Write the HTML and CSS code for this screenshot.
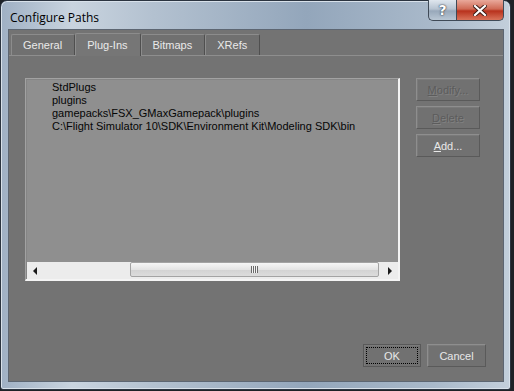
FILE: index.html
```html
<!DOCTYPE html>
<html lang="en">
<head>
    <meta charset="UTF-8">
    <title>Configure Paths</title>
    <link rel="stylesheet" href="styles.css">
</head>
<body>
    <div class="window">
        <div class="titlebar">
            <span class="title">Configure Paths</span>
            <div class="caption-buttons">
                <span class="cap help">?</span>
                <span class="cap close">
                    <svg width="14" height="11" viewBox="0 0 14 11">
                        <path d="M2 1 L12 10 M12 1 L2 10" stroke="#3a1a14" stroke-width="4" stroke-linecap="square"/>
                        <path d="M2 1 L12 10 M12 1 L2 10" stroke="#ffffff" stroke-width="2.2" stroke-linecap="square"/>
                    </svg>
                </span>
            </div>
        </div>
        <div class="client">
            <div class="tabs">
                <div class="tab">General</div>
                <div class="tab active">Plug-Ins</div>
                <div class="tab">Bitmaps</div>
                <div class="tab">XRefs</div>
            </div>
            <div class="page">
                <div class="top-row">
                    <div class="listbox">
                        <div class="items">
                            <div class="item">StdPlugs</div>
                            <div class="item">plugins</div>
                            <div class="item">gamepacks\FSX_GMaxGamepack\plugins</div>
                            <div class="item">C:\Flight Simulator 10\SDK\Environment Kit\Modeling SDK\bin</div>
                        </div>
                        <div class="hscroll">
                            <span class="arrow left"></span>
                            <div class="track">
                                <div class="thumb"><span class="grip"></span></div>
                            </div>
                            <span class="arrow right"></span>
                        </div>
                    </div>
                    <div class="side-buttons">
                        <button class="btn disabled"><u>M</u>odify...</button>
                        <button class="btn disabled"><u>D</u>elete</button>
                        <button class="btn"><u>A</u>dd...</button>
                    </div>
                </div>
                <div class="footer">
                    <button class="btn default"><span class="focus">OK</span></button>
                    <button class="btn">Cancel</button>
                </div>
            </div>
        </div>
    </div>
</body>
</html>
```

FILE: styles.css
```css
body {
    margin: 0;
    background: #1e2227;
    font-family: "Liberation Sans", Arial, sans-serif;
    font-size: 11px;
}
.window {
    width: 511px;
    height: 390px;
    box-sizing: border-box;
    border: 1px solid #2b3440;
    border-radius: 7px 7px 3px 3px;
    background: linear-gradient(90deg, #9fb0c4 0%, #c9d4df 14%, #b3c1d0 30%, #93a6bb 60%, #a9b9ca 85%, #c3cfdb 100%);
    padding: 0 6px 7px 7px;
    display: flex;
    flex-direction: column;
    box-shadow: inset 0 0 0 1px #d8e1ea;
}
.titlebar {
    height: 28px;
    display: flex;
    align-items: flex-start;
    justify-content: space-between;
    flex-shrink: 0;
}
.title {
    font-family: "Open Sans", "DejaVu Sans", sans-serif;
    font-size: 12px;
    color: #000;
    margin: 8px 0 0 2px;
}
.caption-buttons {
    display: flex;
    margin-top: -1px;
}
.cap {
    height: 20px;
    display: flex;
    align-items: center;
    justify-content: center;
    border: 1px solid #3f4a57;
    border-top: none;
}
.help {
    width: 27px;
    border-radius: 0 0 0 5px;
    border-right: none;
    background: linear-gradient(#dfe6ee, #b6c3d1 45%, #98a8ba 55%, #b9c7d4);
    color: #fff;
    font-weight: bold;
    font-size: 14px;
    font-family: "DejaVu Sans", sans-serif;
    text-shadow: 0 0 2px #2c3440, 0 0 1px #2c3440;
}
.close {
    width: 46px;
    border-radius: 0 0 5px 0;
    background: linear-gradient(#e9a99b, #cf6a55 45%, #b8321d 55%, #d9735a);
}
.client {
    flex: 1;
    background: #737373;
    border: 1px solid #5d6672;
    display: flex;
    flex-direction: column;
    color: #e6e6e6;
}
.tabs {
    display: flex;
    padding: 3px 0 0 2px;
    height: 22px;
    flex-shrink: 0;
}
.tab {
    margin-top: 1px;
    height: 20px;
    padding: 0 12px 0 11px;
    display: flex;
    align-items: center;
    border: 1px solid #8c8c8c;
    border-bottom: none;
    border-right-color: #4f4f4f;
    border-radius: 2px 2px 0 0;
    background: #707070;
    color: #eaeaea;
}
.tab.active {
    margin-top: 0;
    height: 22px;
    background: #767676;
    position: relative;
    z-index: 1;
    margin-bottom: -1px;
}
.page {
    flex: 1;
    border-top: 1px solid #8e8e8e;
    display: flex;
    flex-direction: column;
    padding: 22px 17px 14px 16px;
}
.top-row {
    display: flex;
    align-items: flex-start;
}
.listbox {
    width: 375px;
    height: 203px;
    box-sizing: border-box;
    border: 1px solid #a2a2a2;
    border-right: 2px solid #f4f4f4;
    border-bottom: 2px solid #f4f4f4;
    box-shadow: inset 1px 1px 0 #858585;
    background: #8f8f8f;
    display: flex;
    flex-direction: column;
}
.items {
    flex: 1;
    padding: 2px 0 0 26px;
    color: #050505;
}
.item {
    line-height: 13px;
    height: 13px;
}
.hscroll {
    height: 17px;
    margin: 0 0 0 1px;
    display: flex;
    background: #ececec;
}
.arrow {
    width: 17px;
    height: 17px;
    position: relative;
}
.arrow::after {
    content: "";
    position: absolute;
    top: 5px;
    border-top: 4px solid transparent;
    border-bottom: 4px solid transparent;
}
.arrow.left::after {
    left: 6px;
    border-right: 4px solid #1a1a1a;
}
.arrow.right::after {
    left: 7px;
    border-left: 4px solid #1a1a1a;
}
.track {
    flex: 1;
    display: flex;
    padding-left: 86px;
}
.thumb {
    width: 249px;
    height: 15px;
    box-sizing: border-box;
    border: 1px solid #a3a3a3;
    border-radius: 2px;
    background: linear-gradient(#f6f6f6, #e4e4e4 50%, #d2d2d2 51%, #dcdcdc);
    display: flex;
    align-items: center;
    justify-content: center;
}
.grip {
    width: 7px;
    height: 7px;
    background: repeating-linear-gradient(90deg, #6a6a6a 0 1px, #f4f4f4 1px 2px);
}
.side-buttons {
    display: flex;
    flex-direction: column;
    gap: 5px;
    margin-left: 16px;
}
.btn {
    width: 64px;
    height: 23px;
    box-sizing: border-box;
    background: #717171;
    border: 1px solid #8e8e8e;
    border-right-color: #5a5a5a;
    border-bottom-color: #5a5a5a;
    box-shadow: inset 1px 1px 0 #7a7a7a;
    color: #e8e8e8;
    font-family: "Liberation Sans", Arial, sans-serif;
    font-size: 11px;
    padding: 0;
    display: flex;
    align-items: center;
    justify-content: center;
}
.btn.disabled {
    color: #5c5c5c;
    text-shadow: 1px 1px 0 #828282;
}
.footer {
    margin-top: auto;
    display: flex;
    justify-content: flex-end;
    gap: 6px;
}
.footer .btn {
    width: 58px;
}
.footer .btn:last-child {
    width: 59px;
}
.btn.default {
    border-color: #595959;
}
.focus {
    display: flex;
    align-items: center;
    justify-content: center;
    width: 52px;
    height: 17px;
    box-sizing: border-box;
    border: 1px dotted #000;
}
```
